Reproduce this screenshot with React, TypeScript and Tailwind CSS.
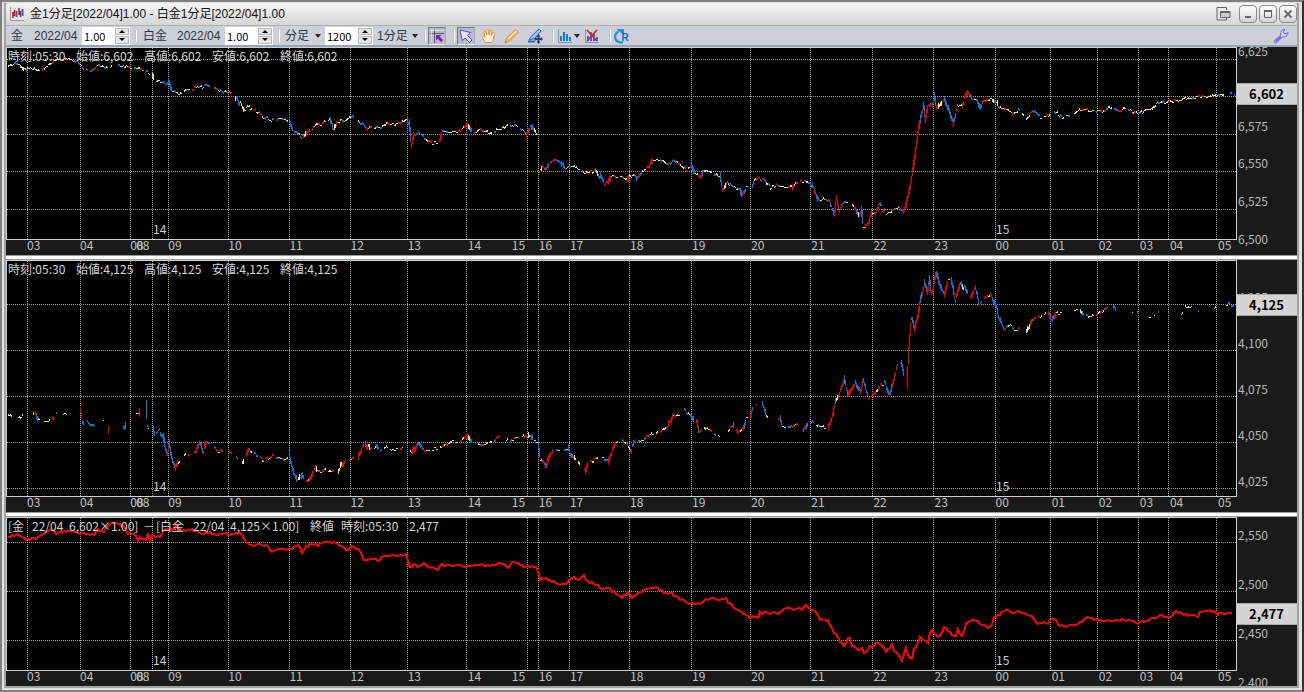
import { useState } from "react";
import type { ReactNode } from "react";

type Point = { x: number; y: number };
type Tick = { x: number; label: string };
type Level = { y: number; label: string };

const PLOT_LEFT = 7;
const PLOT_WIDTH = 1229;

const GRID_X = [
  27, 80, 130, 152, 168, 228, 289, 350, 407, 466, 527, 538, 569, 629, 691, 750,
  810, 872, 933, 995, 1050, 1097, 1138, 1168, 1216,
];

const TICKS: Tick[] = [
  { x: 28, label: "03" },
  { x: 81, label: "04" },
  { x: 131, label: "08" },
  { x: 137, label: "08" },
  { x: 169, label: "09" },
  { x: 229, label: "10" },
  { x: 290, label: "11" },
  { x: 351, label: "12" },
  { x: 408, label: "13" },
  { x: 468, label: "14" },
  { x: 512, label: "15" },
  { x: 539, label: "16" },
  { x: 570, label: "17" },
  { x: 630, label: "18" },
  { x: 692, label: "19" },
  { x: 751, label: "20" },
  { x: 811, label: "21" },
  { x: 873, label: "22" },
  { x: 934, label: "23" },
  { x: 995, label: "00" },
  { x: 1051, label: "01" },
  { x: 1098, label: "02" },
  { x: 1139, label: "03" },
  { x: 1169, label: "04" },
  { x: 1217, label: "05" },
];

const DAYS: Tick[] = [
  { x: 153, label: "14" },
  { x: 996, label: "15" },
];

// "|" starts a new run of bars
const GOLD =
  "8,66 13,64 20,64 25,70 27,67 33,68 37,70 41,71 45,67 50,64 56,60 62,58 68,59 72,59 78,62 82,66 87,71 93,70 97,66 104,67 110,66 114,63 120,67 125,66 130,69 137,68 143,70 148,74 152,77 156,82 161,81 165,85 168,83 172,91 177,93 182,92 187,88 192,89 198,87 205,86 210,86 216,88 222,92 227,93 229,92 235,96 240,103 244,109 248,107 254,110 259,113 265,118 271,120 277,119 284,118 289,121 293,130 298,133 303,138 307,132 313,126 320,124 327,121 330,120 333,128 337,122 346,119 351,116 356,121 362,123 368,129 375,127 380,128 387,123 395,124 402,122 407,119 409,124 410,133 411,144 414,134 418,132 424,138 432,143 439,141 442,131 450,132 458,131 466,124 474,133 480,129 490,134 496,129 505,127 512,124 519,128 526,133 530,126 534,131 537,135 | 539,171 542,167 545,170 549,164 554,159 560,163 565,169 571,165 575,167 583,172 595,171 601,178 604,184 608,181 611,175 615,177 620,176 627,180 629,175 636,177 642,170 648,167 653,159 660,159 668,164 674,160 680,164 686,170 691,166 695,174 700,176 704,170 712,173 720,177 722,189 727,183 733,187 740,189 742,194 746,186 752,186 754,180 758,177 765,183 770,188 776,184 785,188 792,187 796,182 805,181 810,184 815,192 819,201 825,198 830,203 834,212 836,198 839,210 843,203 848,201 855,208 859,214 861,210 863,228 865,228 868,222 872,213 875,213 879,203 885,213 890,211 894,208 899,208 903,211 906,202 910,185 914,160 918,130 920,120 923,104 925,119 928,103 931,106 934,98 936,108 940,103 944,98 948,108 953,122 957,106 962,104 968,90 972,98 977,101 980,106 985,100 992,98 1000,107 1005,109 1012,113 1018,110 1026,117 1032,111 1040,118 1048,115 1053,111 1062,117 1070,115 1080,110 1100,111 1110,108 1120,110 1126,108 1138,114 1145,110 1152,108 1158,102 1166,103 1175,100 1190,97 1210,96 1225,94 1230,93 1235,95";

const PLATINUM =
  "8,415 12,416 | 18,417 20,416 23,413 | 33,411 35,413 38,419 42,420 48,422 53,418 57,413 | 63,413 67,415 | 80,410 82,420 84,423 | 87,422 95,427 | 103,421 104,421 | 108,430 109,435 | 123,429 126,421 | 136,413 139,413 140,408 | 146,411 147,428 149,430 | 153,430 155,435 159,431 163,438 165,450 167,454 169,445 172,460 175,468 178,461 182,457 186,453 190,456 196,452 199,443 203,450 207,442 213,446 218,451 223,450 | 229,452 235,457 241,462 246,456 249,450 258,456 264,461 272,456 283,459 289,456 293,470 297,480 301,474 304,482 309,479 312,472 315,468 317,471 320,471 325,470 329,472 334,470 | 338,470 343,463 346,457 | 351,459 358,457 361,448 365,443 370,450 376,446 379,451 385,447 392,450 403,448 | 408,448 412,452 417,442 423,450 432,449 443,446 453,441 460,441 466,435 472,442 480,445 490,443 498,436 505,441 515,438 522,438 528,433 533,440 538,442 540,460 543,462 546,466 548,458 553,450 563,451 568,449 573,457 581,466 585,469 588,462 595,460 600,456 608,461 612,450 616,441 621,439 628,446 631,449 635,441 643,439 650,434 660,431 667,426 673,415 680,414 684,410 690,415 696,422 699,431 703,427 710,430 716,435 722,437 | 728,430 733,425 738,431 743,428 746,417 750,415 753,406 757,402 | 762,405 766,417 772,419 780,418 782,427 790,428 798,422 | 803,429 810,421 815,424 822,427 828,428 831,418 835,400 838,396 842,385 844,380 848,396 852,388 855,381 860,390 863,382 868,398 872,394 875,392 880,385 884,383 889,393 893,380 897,365 901,362 904,377 907,376 908,355 909,340 911,318 914,328 918,314 920,300 924,282 927,290 929,278 931,293 936,274 940,285 944,293 948,279 951,280 955,300 960,282 966,291 970,296 975,288 979,303 984,298 990,293 995,304 997,312 1000,320 1004,330 1010,325 1014,329 1020,328 1026,329 1032,320 1040,317 1048,311 1051,321 1056,313 1065,312 1078,309 1085,317 1098,314 1104,308 1109,308 | 1113,306 1116,311 | 1132,311 1133,311 | 1137,313 1138,314 | 1149,317 1151,317 | 1154,314 1155,314 | 1158,311 1159,311 | 1168,314 1169,314 | 1181,313 1183,312 | 1185,307 1192,305 | 1198,312 1199,312 | 1214,309 1216,307 | 1226,304 1230,304 | 1231,306 1234,306";

const SPREAD =
  "8,537 18,534 26,540 35,538 42,535 47,532 52,529 56,534 68,531 80,534 94,534 97,529 103,533 108,526 114,523 122,525 128,533 134,534 138,540 140,537 145,541 148,533 149,542 152,536 159,537 163,534 165,528 172,530 176,526 183,531 192,529 198,532 203,534 206,531 214,534 222,534 237,534 240,532 245,540 251,545 260,544 268,546 271,553 277,549 286,550 292,548 297,544 302,551 310,544 318,545 325,541 332,542 340,545 348,551 351,545 360,551 365,561 370,558 378,560 386,556 395,556 407,555 410,568 416,563 418,567 424,564 430,567 438,569 442,565 450,565 465,566 480,565 490,565 500,563 508,566 513,561 520,565 526,567 537,567 540,580 545,578 552,581 560,584 568,583 574,577 577,581 584,576 590,582 597,585 603,590 608,587 615,593 622,598 628,591 632,597 640,592 650,588 658,587 665,593 672,594 680,599 690,604 700,603 710,598 718,599 726,600 733,606 742,612 750,618 754,615 757,620 760,613 771,613 780,614 784,609 792,609 803,609 806,605 810,609 816,613 822,620 828,620 832,629 834,634 837,633 840,641 844,646 849,636 852,645 856,648 859,651 862,648 864,654 869,649 877,642 886,652 892,645 897,655 902,660 906,648 911,661 915,647 920,637 925,641 928,643 931,628 935,636 941,636 944,627 949,631 955,637 958,630 962,636 967,622 975,620 981,624 990,628 994,618 999,615 1007,610 1013,614 1018,611 1026,614 1033,616 1037,624 1043,622 1049,624 1051,618 1057,621 1061,626 1067,626 1079,623 1088,618 1100,620 1121,620 1133,621 1138,623 1153,619 1160,616 1169,617 1176,612 1185,615 1197,616 1202,611 1213,611 1218,614 1232,613";

function parseRuns(text: string): Point[][] {
  return text.split("|").map((run) =>
    run
      .trim()
      .split(" ")
      .map((pair) => {
        const [x, y] = pair.split(",").map(Number);
        return { x, y };
      }),
  );
}

// repeatable pseudo random number in 0..1
function rand(n: number) {
  const v = Math.sin(n * 12.9898) * 43758.5453;
  return v - Math.floor(v);
}

function eachPixel(run: Point[], visit: (x: number, y: number, slope: number) => void) {
  for (let i = 0; i < run.length - 1; i++) {
    const a = run[i];
    const b = run[i + 1];
    const slope = (b.y - a.y) / (b.x - a.x);
    for (let x = a.x; x < b.x; x++) {
      visit(x, a.y + slope * (x - a.x), slope);
    }
  }
}

function barPaths(text: string, skip: number) {
  const paths = { up: "", down: "", flat: "" };
  parseRuns(text).forEach((run) => {
    const short = run[run.length - 1].x - run[0].x < 12;
    eachPixel(run, (x, y, slope) => {
      const steep = Math.abs(slope);
      const group = Math.floor(x / 2);
      if (!short && steep < 1.3 && rand(group + 7) < skip) return;
      const jitter = steep < 0.8 ? 2.6 : 4;
      const top = Math.round(y + (rand(group) - 0.5) * jitter);
      const pick = rand(group * 3 + 31);
      const trend = slope < 0 ? "up" : "down";
      const against = slope < 0 ? "down" : "up";
      let key: "up" | "down" | "flat" = "flat";
      if (steep > 1.5) key = pick > 0.12 ? trend : against;
      else if (steep > 0.6) key = pick > 0.5 ? trend : pick > 0.35 ? against : "flat";
      else if (pick > 0.76) key = trend;
      else if (pick > 0.64) key = against;
      const wick = rand(x + 3) * (steep > 1 ? 5 : 1.6);
      const height = Math.max(key === "flat" ? 1 : 2, Math.round(steep + wick));
      paths[key] += `M${x + 0.5} ${top - Math.floor(height / 2)}v${height}`;
    });
  });
  return paths;
}

function linePath(text: string) {
  let d = "";
  parseRuns(text).forEach((run) => {
    eachPixel(run, (x, y, slope) => {
      if (x % 2) return;
      const spread = Math.abs(slope) > 0.8 ? 4 : 2;
      const py = Math.round(y + (rand(x) - 0.5) * spread);
      d += `${d ? "L" : "M"}${x} ${py}`;
    });
    const last = run[run.length - 1];
    d += `L${last.x} ${last.y}`;
  });
  return d;
}

function Bars({ data, skip }: { data: string; skip: number }) {
  const paths = barPaths(data, skip);
  return (
    <g fill="none" strokeWidth="1">
      <path d={paths.down} stroke="#0a78e0" />
      <path d={paths.up} stroke="#f00000" />
      <path d={paths.flat} stroke="#e8e870" />
    </g>
  );
}

type PanelProps = {
  name: string;
  grow: string;
  top: number;
  height: number;
  gridY: number[];
  levels: Level[];
  price: Level;
  header: ReactNode;
  children: ReactNode;
};

function Panel({ name, grow, top, height, gridY, levels, price, header, children }: PanelProps) {
  const px = (x: number) => `${((x - PLOT_LEFT) / PLOT_WIDTH) * 100}%`;
  const py = (y: number) => `${((y - top) / height) * 100}%`;
  // the scale column also covers the plot border and the time strip
  const full = height + 17;
  const ay = (y: number) => `${((y - top + 1) / full) * 100}%`;

  return (
    <section aria-label={name} className={`flex min-h-0 basis-0 ${grow}`}>
      <div className="flex min-w-0 flex-1 flex-col bg-[#1a1a1a]">
        <div className="relative min-h-0 flex-1 border border-[#d0d0d0] bg-black">
          <svg className="block h-full w-full overflow-visible">
            <svg
              viewBox={`${PLOT_LEFT} ${top} ${PLOT_WIDTH} ${height}`}
              preserveAspectRatio="none"
              width="100%"
              height="100%"
              shapeRendering="crispEdges"
            >
              <g stroke="#a4a4a4" strokeDasharray="1 1">
                {GRID_X.map((x) => (
                  <line key={x} x1={x + 0.5} x2={x + 0.5} y1={top} y2={top + height} />
                ))}
                {gridY.map((y) => (
                  <line key={y} x1={PLOT_LEFT} x2={PLOT_LEFT + PLOT_WIDTH} y1={y + 0.5} y2={y + 0.5} />
                ))}
              </g>
              {children}
            </svg>
            {DAYS.map((day) => (
              <text key={day.label} x={px(day.x)} y={py(top + height - 5)} fill="#d0d0d0">
                {day.label}
              </text>
            ))}
          </svg>
          <div className="absolute top-0 left-px flex whitespace-pre text-[#d4d4d4]">{header}</div>
        </div>
        <svg className="block h-[15px] w-full shrink-0 overflow-visible">
          {TICKS.map((tick) => (
            <text key={tick.x} x={px(tick.x)} y="10" fill="#c0c0c0">
              {tick.label}
            </text>
          ))}
        </svg>
      </div>
      <div className="relative w-[60px] shrink-0 bg-[#1a1a1a]">
        <svg className="block h-full w-full">
          {levels.map((level) => (
            <text key={level.label} x="1" y={ay(level.y + 4)} fill="#b8b8b8">
              {level.label}
            </text>
          ))}
        </svg>
        <output
          className="absolute right-0 left-0 flex h-[22px] -translate-y-1/2 items-center border-y border-[#a8a8a8] bg-[#d4d4d4] pl-3 text-[13px] font-bold text-black"
          style={{ top: ay(price.y) }}
        >
          {price.label}
        </output>
      </div>
    </section>
  );
}

function Splitter() {
  return <div className="h-[5px] shrink-0 border-y border-[#9a9a9a] bg-white" />;
}

function Quote({ price }: { price: string }) {
  return (
    <>
      <span className="w-[68px]">時刻:05:30</span>
      <span className="w-[68px]">始値:{price}</span>
      <span className="w-[68px]">高値:{price}</span>
      <span className="w-[68px]">安値:{price}</span>
      <span className="w-[68px]">終値:{price}</span>
    </>
  );
}

function Caret() {
  return (
    <svg viewBox="0 0 6 4" className="pointer-events-none absolute right-0 h-1 w-1.5">
      <path d="M0 0h6L3 4z" fill="#222" />
    </svg>
  );
}

function Spinner({ label, initial }: { label: string; initial: string }) {
  const [value, setValue] = useState(initial);
  const digits = initial.includes(".") ? 2 : 0;
  const step = (by: number) => setValue((Number(value) + by).toFixed(digits));

  return (
    <div className="flex h-[18px] w-12 items-start bg-white pt-px pr-px">
      <input
        aria-label={label}
        value={value}
        onChange={(e) => setValue(e.target.value)}
        className="h-4 min-w-0 flex-1 bg-transparent pl-0.5 font-['Noto_Sans_CJK_JP',sans-serif] text-[11px] leading-4 text-black outline-none"
      />
      <div className="flex h-4 w-[14px] flex-col gap-px">
        <button
          type="button"
          aria-label={`${label} +`}
          onClick={() => step(1)}
          className="flex flex-1 items-center justify-center border border-[#b8b8b8] bg-[#e6e6e6]"
        >
          <svg viewBox="0 0 6 3" className="h-[3px] w-1.5">
            <path d="M0 3h6L3 0z" fill="#000" />
          </svg>
        </button>
        <button
          type="button"
          aria-label={`${label} -`}
          onClick={() => step(-1)}
          className="flex flex-1 items-center justify-center border border-[#b8b8b8] bg-[#e6e6e6]"
        >
          <svg viewBox="0 0 6 3" className="h-[3px] w-1.5">
            <path d="M0 0h6L3 3z" fill="#000" />
          </svg>
        </button>
      </div>
    </div>
  );
}

function Divider() {
  return <div className="h-3 w-0.5 border-r border-white bg-[#bfc2ca]" />;
}

function ToolButton({ label, pressed, children }: { label: string; pressed?: boolean; children: ReactNode }) {
  return (
    <button
      type="button"
      aria-label={label}
      aria-pressed={pressed}
      className={
        pressed
          ? "flex h-[18px] w-[18px] items-center justify-center border border-[#77797f] border-r-[#a9abb2] border-b-[#eee] bg-[#b9bcc8]"
          : "flex h-[18px] w-[18px] items-center justify-center"
      }
    >
      {children}
    </button>
  );
}

function BarsGlyph() {
  return (
    <>
      <path d="M1.500 1v13.500H15" stroke="#8294b4" fill="none" />
      <path d="M4 8v5M7 4v9M10 6v7M13 9v4" stroke="#1478e6" strokeWidth="2" fill="none" />
    </>
  );
}

function TitleBar() {
  return (
    <header className="flex h-[22px] shrink-0 items-center rounded-t bg-linear-to-b from-[#f4f4f4] to-[#d6d6d6] pl-1">
      <svg viewBox="0 0 14 14" className="h-[14px] w-[14px]">
        <path d="M0 0h14v14H0z" fill="#e4e6ea" />
        <path d="M.5 0v13.500H14" stroke="#9a9a9a" fill="none" />
        <path d="M3 5v6M4.500 3v6M9 1v7M10.500 4v6" stroke="#e01010" strokeWidth="1.500" />
        <path d="M6.500 4v6M12.500 2v7" stroke="#1c64d8" strokeWidth="2" />
      </svg>
      <h1 className="ml-1.5 flex-1 text-xs text-[#111]">金1分足[2022/04]1.00 - 白金1分足[2022/04]1.00</h1>
      <button type="button" aria-label="Float" className="mr-2 flex h-[18px] w-4 items-center justify-center">
        <svg viewBox="0 0 15 14" className="h-[14px] w-[15px]" fill="none" stroke="#666">
          <path d="M10.500 3V.5H1v12.500h9.500V11" />
          <path d="M4.500 4.500h9.500v6H4.500z" fill="#ccc" />
          <path d="M4.500 5h9.500" strokeWidth="2" />
        </svg>
      </button>
      <div className="flex gap-0.5">
        {["Minimize", "Maximize", "Close"].map((label) => (
          <button
            key={label}
            type="button"
            aria-label={label}
            className="flex h-[18px] w-[18px] items-center justify-center rounded-sm border border-[#8c8c8c] bg-linear-to-b from-white to-[#d4d4d4]"
          >
            <svg viewBox="0 0 10 10" className="h-2.5 w-2.5" fill="none" stroke="#666">
              {label === "Minimize" && <path d="M2 8h6" strokeWidth="2" />}
              {label === "Maximize" && (
                <>
                  <path d="M1.500 1.500h7v7h-7z" />
                  <path d="M1 2h8" strokeWidth="2" />
                </>
              )}
              {label === "Close" && <path d="M1.500 1.500l7 7M8.500 1.500l-7 7" strokeWidth="1.800" />}
            </svg>
          </button>
        ))}
      </div>
    </header>
  );
}

function Toolbar() {
  return (
    <div
      role="toolbar"
      className="flex h-[22px] shrink-0 items-center border-t border-[#b0b0b0] border-b-2 border-b-[#98a2b4] bg-[#cdd0d9] text-xs text-[#30343c]"
    >
      <span className="ml-[5px] w-[23px]">金</span>
      <span className="w-12">2022/04</span>
      <Spinner label="金 倍率" initial="1.00" />
      <div className="ml-[5px]">
        <Divider />
      </div>
      <span className="ml-1.5 w-[34px]">白金</span>
      <span className="w-12">2022/04</span>
      <Spinner label="白金 倍率" initial="1.00" />
      <div className="ml-[5px]">
        <Divider />
      </div>
      <div className="relative mr-1 ml-[5px] flex items-center">
        <select aria-label="足種" className="w-9 appearance-none bg-transparent outline-none">
          <option>分足</option>
          <option>日足</option>
        </select>
        <Caret />
      </div>
      <Spinner label="本数" initial="1200" />
      <div className="relative ml-1 flex items-center">
        <select aria-label="間隔" className="w-[41px] appearance-none bg-transparent outline-none">
          <option>1分足</option>
          <option>5分足</option>
        </select>
        <Caret />
      </div>
      <div className="ml-1.5 flex items-center gap-0.5">
        <Divider />
        <ToolButton label="Crosshair" pressed>
          <svg viewBox="0 0 16 16" className="h-4 w-4" fill="none">
            <path d="M1 5.500h14M5.500 1v14" stroke="#5a5a78" />
            <path d="M1 2.500h14M2.500 1v14" stroke="#d4d6e2" />
            <path d="M7 7h5.500l-1.800 1.800 3.300 3.300-2 2-3.300-3.300L7 12.500z" fill="#7a20b8" />
          </svg>
        </ToolButton>
      </div>
      <div className="ml-[7px] flex items-center gap-[5px]">
        <div className="flex items-center gap-0.5">
          <Divider />
          <ToolButton label="Select" pressed>
            <svg viewBox="0 0 16 16" className="h-4 w-4">
              <path d="M2 2l10.500 2.500-3 3 4.500 4.500-2.500 2.500L7 10l-2.800 2.800z" fill="#e4e0fa" stroke="#5a4eb4" />
            </svg>
          </ToolButton>
        </div>
        <ToolButton label="Pan">
          <svg viewBox="0 0 16 16" className="h-4 w-4">
            <path
              d="M4.500 14.500L1.500 9.500C.8 8 2.300 7.600 3 8.600l1 1L3 4.400C2.800 3 4.400 2.600 4.800 4l.9 3L5.800 2.500c0-1.400 1.800-1.400 1.900 0L8 7l1-4.300c.3-1.300 2-1 1.800.4L10.300 7.500l1.500-2.700c.7-1.200 2.200-.4 1.700.8-1 3-.7 6.400-2.700 8.900z"
              fill="#fff2dc"
              stroke="#e09428"
            />
          </svg>
        </ToolButton>
        <ToolButton label="Pencil">
          <svg viewBox="0 0 16 16" className="h-4 w-4">
            <path d="M1 15l1.500-5L11.500 1.500l3 3L5.500 13z" fill="#f6b45a" stroke="#d08a30" strokeWidth=".8" />
            <path d="M4 11L12.500 3" stroke="#fce6c0" strokeWidth="1.500" />
            <path d="M1 15l.5-1.800 1.200 1.200z" fill="#a66a20" />
          </svg>
        </ToolButton>
        <ToolButton label="Move line">
          <svg viewBox="0 0 16 16" className="h-4 w-4">
            <path d="M2 12l3-4.500L12 1l2 2-6 7.500z" fill="#9cc0f0" stroke="#2c6cc4" />
            <path d="M1 13.500h7" stroke="#2c6cc4" strokeWidth="2" />
            <path d="M11.500 6l2 2.500h-1v1.500H14V9l2 2-2 2v-1h-1.500v1.500h1l-2 2.500-2-2.500h1V12H9v1l-2-2 2-2v1h1.500V8.500h-1z" fill="#24406e" />
          </svg>
        </ToolButton>
      </div>
      <div className="ml-2 flex items-center">
        <Divider />
        <div className="relative ml-0.5 flex w-6 items-center">
          <ToolButton label="Indicators">
            <svg viewBox="0 0 16 16" className="h-4 w-4">
              <BarsGlyph />
            </svg>
          </ToolButton>
          <Caret />
        </div>
        <div className="mr-2 ml-[3px]">
          <ToolButton label="Remove indicators">
            <svg viewBox="0 0 16 16" className="h-4 w-4">
              <BarsGlyph />
              <path d="M3 2l10 11M13 2L3 13" stroke="#e81c24" strokeWidth="1.800" />
            </svg>
          </ToolButton>
        </div>
        <Divider />
        <div className="ml-0.5">
          <ToolButton label="Reload">
            <svg viewBox="0 0 16 16" className="h-4 w-4">
              <path d="M4.500 3.500A5.500 5.500 0 1 0 9 14" fill="none" stroke="#1c90e8" strokeWidth="2.200" />
              <path d="M2.500 1h7.500v6.500z" fill="#1c90e8" />
              <text x="7.500" y="13" fontSize="10" fontWeight="bold" fill="#1c6cc8">
                R
              </text>
            </svg>
          </ToolButton>
        </div>
      </div>
      <div className="mr-[7px] ml-auto">
        <ToolButton label="Settings">
          <svg viewBox="0 0 16 16" className="h-4 w-4">
            <path
              d="M1.500 12.500L8 7C7 4 9 1.200 12 1.500L10.500 3.500l.5 2 2 .5L15 4.500c.3 3-2.500 5-5.500 4.200L3.500 14.800c-1.500.8-3-.8-2-2.300z"
              fill="#dcd8fa"
              stroke="#6a5ee0"
            />
            <path d="M2.500 13.500L8 8.500" stroke="#7468ec" strokeWidth="2" />
          </svg>
        </ToolButton>
      </div>
    </div>
  );
}

export default function App() {
  return (
    <div className="flex h-screen flex-col overflow-hidden border-2 border-[#808080] border-r-[#3a2c30] bg-[#c9c9c9] font-['Liberation_Sans','Noto_Sans_CJK_JP',sans-serif]">
      <div className="flex min-h-0 flex-1 flex-col border-t border-r-3 border-b-2 border-l-2 border-[#e2e2e2]">
        <div className="flex min-h-0 flex-1 flex-col border-x-2 border-b-2 border-[#a2a2a2]">
          <TitleBar />
          <Toolbar />
          <main className="flex min-h-0 flex-1 flex-col font-['Noto_Sans_CJK_JP',sans-serif] text-xs leading-4">
            <Panel
              name="金"
              grow="grow-[208]"
              top={48}
              height={191}
              gridY={[59, 96, 134, 171, 209]}
              levels={[
                { y: 52, label: "6,625" },
                { y: 127, label: "6,575" },
                { y: 164, label: "6,550" },
                { y: 202, label: "6,525" },
                { y: 240, label: "6,500" },
              ]}
              price={{ y: 94, label: "6,602" }}
              header={<Quote price="6,602" />}
            >
              <Bars data={GOLD} skip={0.12} />
            </Panel>
            <Splitter />
            <Panel
              name="白金"
              grow="grow-[252]"
              top={261}
              height={235}
              gridY={[304, 350, 396, 442, 488]}
              levels={[
                { y: 298, label: "4,125" },
                { y: 344, label: "4,100" },
                { y: 390, label: "4,075" },
                { y: 436, label: "4,050" },
                { y: 482, label: "4,025" },
              ]}
              price={{ y: 305, label: "4,125" }}
              header={<Quote price="4,125" />}
            >
              <Bars data={PLATINUM} skip={0.36} />
            </Panel>
            <Splitter />
            <Panel
              name="金 - 白金"
              grow="grow-[169]"
              top={518}
              height={152}
              gridY={[542, 591, 640]}
              levels={[
                { y: 536, label: "2,550" },
                { y: 585, label: "2,500" },
                { y: 634, label: "2,450" },
                { y: 683, label: "2,400" },
              ]}
              price={{ y: 614, label: "2,477" }}
              header={
                <>
                  <span className="w-6">[金</span>
                  <span className="w-[37px]">22/04</span>
                  <span className="w-[74px]">6,602×1.00]</span>
                  <span className="w-[13px]">－</span>
                  <span className="w-[37px]">[白金</span>
                  <span className="w-[37px]">22/04</span>
                  <span className="w-20">4,125×1.00]</span>
                  <span className="w-[31px]">終値</span>
                  <span className="w-[68px]">時刻:05:30</span>
                  <span>2,477</span>
                </>
              }
            >
              <path d={linePath(SPREAD)} fill="none" stroke="#f00" strokeWidth="2" />
            </Panel>
          </main>
        </div>
      </div>
    </div>
  );
}
